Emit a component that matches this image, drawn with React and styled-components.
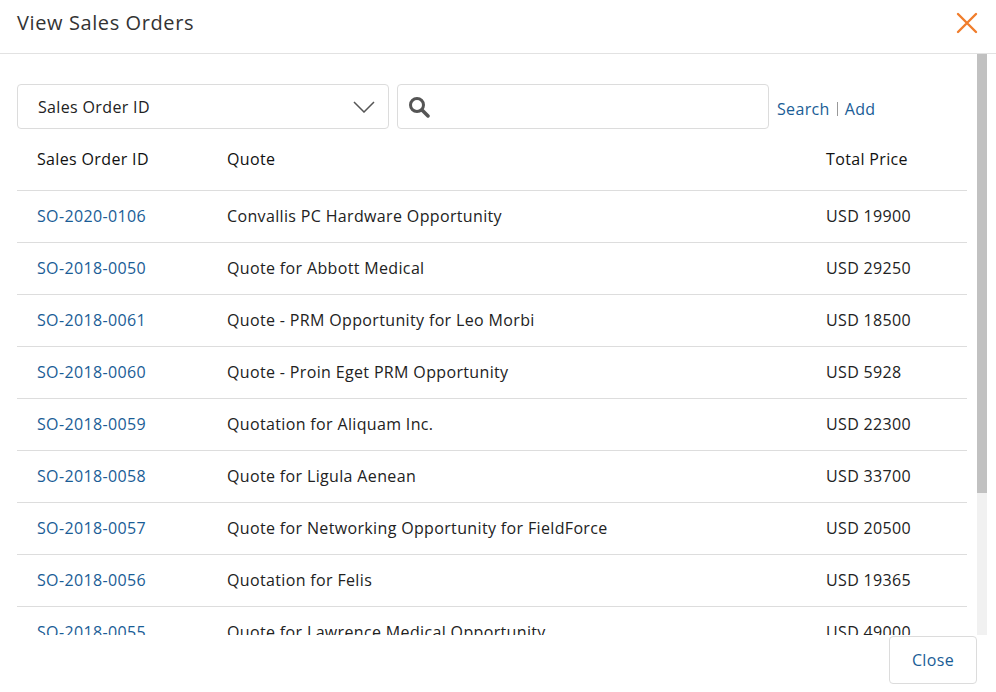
import React from 'react';
import styled, { createGlobalStyle } from 'styled-components';

const Global = createGlobalStyle`
  body { margin: 0; font-family: "Open Sans", "Noto Sans", sans-serif; background: #fff; color: #222; }
`;

const rows = [
  ['SO-2020-0106', 'Convallis PC Hardware Opportunity', 'USD 19900'],
  ['SO-2018-0050', 'Quote for Abbott Medical', 'USD 29250'],
  ['SO-2018-0061', 'Quote - PRM Opportunity for Leo Morbi', 'USD 18500'],
  ['SO-2018-0060', 'Quote - Proin Eget PRM Opportunity', 'USD 5928'],
  ['SO-2018-0059', 'Quotation for Aliquam Inc.', 'USD 22300'],
  ['SO-2018-0058', 'Quote for Ligula Aenean', 'USD 33700'],
  ['SO-2018-0057', 'Quote for Networking Opportunity for FieldForce', 'USD 20500'],
  ['SO-2018-0056', 'Quotation for Felis', 'USD 19365'],
  ['SO-2018-0055', 'Quote for Lawrence Medical Opportunity', 'USD 49000'],
  ['SO-2018-0054', 'Quote for Hardware Upgrade', 'USD 12000'],
];

export default function App() {
  return (
    <Modal>
      <Global />
      <Header>
        <Title>View Sales Orders</Title>
        <CloseX aria-label="close">
          <svg width="22" height="22" viewBox="0 0 22 22">
            <path d="M2 2L20 20M20 2L2 20" stroke="#f07d2c" strokeWidth="2.4" strokeLinecap="round" />
          </svg>
        </CloseX>
      </Header>
      <Middle>
        <Body>
          <Filters>
            <Select>
              <span>Sales Order ID</span>
              <svg width="22" height="12" viewBox="0 0 22 12">
                <path d="M1 1L11 11L21 1" fill="none" stroke="#555" strokeWidth="1.5" />
              </svg>
            </Select>
            <SearchBox>
              <svg width="22" height="22" viewBox="0 0 22 22">
                <circle cx="9" cy="9" r="6.5" fill="none" stroke="#555" strokeWidth="3" />
                <path d="M14 14L20 20" stroke="#555" strokeWidth="3.5" strokeLinecap="round" />
              </svg>
            </SearchBox>
            <Links>
              <Link>Search</Link>
              <Sep />
              <Link>Add</Link>
            </Links>
          </Filters>
          <Table>
            <thead>
              <tr>
                <Th $w="190px">Sales Order ID</Th>
                <Th>Quote</Th>
                <Th $w="161px">Total Price</Th>
              </tr>
            </thead>
            <tbody>
              {rows.map(r => (
                <tr key={r[0]}>
                  <Td><Link>{r[0]}</Link></Td>
                  <Td>{r[1]}</Td>
                  <Td>{r[2]}</Td>
                </tr>
              ))}
            </tbody>
          </Table>
        </Body>
        <Track><Thumb /></Track>
      </Middle>
      <Footer>
        <CloseBtn>Close</CloseBtn>
      </Footer>
    </Modal>
  );
}

const Modal = styled.div`
  width: 996px;
  height: 692px;
  display: flex;
  flex-direction: column;
  overflow: hidden;
  letter-spacing: 0.35px;
`;

const Header = styled.div`
  height: 53px;
  flex-shrink: 0;
  border-bottom: 1px solid #e2e2e2;
  display: flex;
  align-items: center;
  justify-content: space-between;
  padding: 0 18px 0 17px;
`;

const Title = styled.h1`
  margin: 0;
  font-size: 20px;
  font-weight: 400;
  color: #333;
  margin-top: -8px;
  letter-spacing: 0.6px;
`;

const CloseX = styled.button`
  border: none;
  background: none;
  padding: 0;
  margin-top: -8px;
  display: flex;
`;

const Middle = styled.div`
  height: 581px;
  flex-shrink: 0;
  display: flex;
`;

const Body = styled.div`
  width: 977px;
  overflow: hidden;
  padding: 30px 10px 0 17px;
  box-sizing: border-box;
`;

const Track = styled.div`
  width: 10px;
  background: #f1f1f1;
`;

const Thumb = styled.div`
  height: 439px;
  background: #c1c1c1;
`;

const Filters = styled.div`
  display: flex;
  align-items: center;
  gap: 8px;
  height: 45px;
`;

const Box = styled.div`
  height: 45px;
  box-sizing: border-box;
  border: 1px solid #dcdcdc;
  border-radius: 4px;
  display: flex;
  align-items: center;
`;

const Select = styled(Box)`
  width: 372px;
  justify-content: space-between;
  padding: 0 13px 0 20px;
  font-size: 16px;
  color: #222;
`;

const SearchBox = styled(Box)`
  width: 372px;
  padding: 0 10px;
`;

const Links = styled.div`
  display: flex;
  align-items: center;
  gap: 7px;
  margin-top: 4px;
`;

const Link = styled.a`
  color: #1a5d96;
  font-size: 16px;
  cursor: pointer;
`;

const Sep = styled.span`
  width: 1px;
  height: 14px;
  background: #999;
`;

const Table = styled.table`
  width: 950px;
  border-collapse: collapse;
  font-size: 16px;
`;

const Th = styled.th`
  text-align: left;
  font-weight: 500;
  color: #111;
  height: 61px;
  padding: 0 20px;
  width: ${p => p.$w || 'auto'};
  border-bottom: 1px solid #ddd;
  box-sizing: border-box;
`;

const Td = styled.td`
  height: 52px;
  padding: 0 20px;
  border-bottom: 1px solid #ddd;
  box-sizing: border-box;
  color: #222;
`;

const Footer = styled.div`
  flex: 1;
  display: flex;
  justify-content: flex-end;
  align-items: flex-start;
  padding: 1px 19px 0 0;
`;

const CloseBtn = styled.button`
  width: 88px;
  height: 48px;
  border: 1px solid #dcdcdc;
  border-radius: 4px;
  background: #fff;
  color: #1a5d96;
  font-family: inherit;
  font-size: 16px;
  letter-spacing: 0.35px;
`;
